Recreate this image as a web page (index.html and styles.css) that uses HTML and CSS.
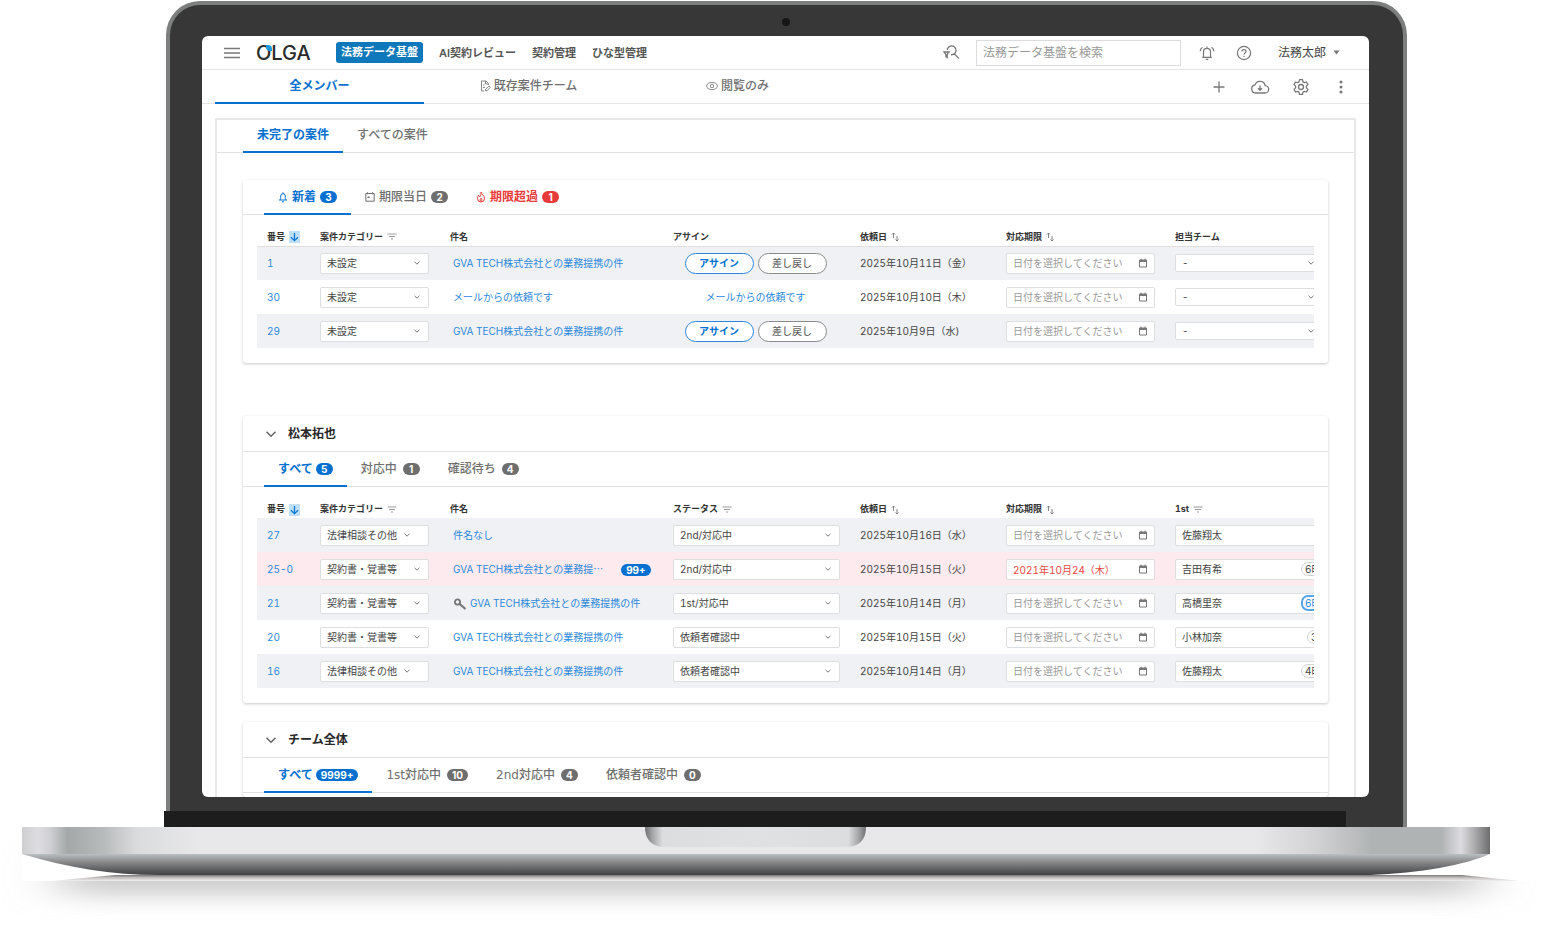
FILE: index.html
```html
<!DOCTYPE html>
<html lang="ja">
<head>
<meta charset="utf-8">
<meta name="viewport" content="width=device-width, initial-scale=1">
<title>OLGA 法務データ基盤</title>
<link rel="stylesheet" href="styles.css">
</head>
<body>
<svg class="sprite" aria-hidden="true">
  <symbol id="chev" viewBox="0 0 8 8"><path d="M1.5 2.8 4 5.2l2.500-2.400" fill="none" stroke="currentColor"/></symbol>
  <symbol id="cal" viewBox="0 0 10 10"><path d="M1.500 2h7v7h-7zM3 .6V2M7 .6V2" fill="none" stroke="currentColor"/><path d="M1.500 2h7v2h-7z" fill="currentColor"/></symbol>
  <symbol id="filter" viewBox="0 0 10 8"><path d="M.5 1h9M2 3.500h6M4 6h2" fill="none" stroke="currentColor" stroke-width="1.200"/></symbol>
  <symbol id="sort" viewBox="0 0 8 10"><path d="M2.500 6V1M1 2.500 2.500 1 4 2.500M6 4v5M4.500 7.500 6 9l1.500-1.500" fill="none" stroke="currentColor" stroke-width=".9"/></symbol>
  <symbol id="down" viewBox="0 0 11 11"><path d="M5.500 1.500v7.500M2 5.700 5.500 9.200 9 5.700" fill="none" stroke="currentColor" stroke-width="1.300"/></symbol>
  <symbol id="fold" viewBox="0 0 12 12"><path d="M1.500 3.800 6 8.300l4.500-4.500" fill="none" stroke="currentColor" stroke-width="1.500"/></symbol>
</svg>

<div class="laptop">
  <div class="lid-stack">
    <div class="lid">
      <div class="lid-top"><span class="camera"></span></div>
      <div class="screen">
        <header class="topbar">
          <button class="icon-btn" aria-label="メニュー"><svg width="16" height="12" viewBox="0 0 16 12"><path d="M0 1.500h16M0 6h16M0 10.500h16" stroke="#7a7a7a" stroke-width="1.300"/></svg></button>
          <a class="logo" href="#">OLGA<span class="logo-dot"></span></a>
          <nav class="nav">
            <a class="current" href="#">法務データ基盤</a>
            <a href="#">AI契約レビュー</a>
            <a href="#">契約管理</a>
            <a href="#">ひな型管理</a>
          </nav>
          <button class="icon-btn advanced" aria-label="詳細検索"><svg width="17" height="16" viewBox="0 0 17 16" fill="none" stroke="#777" stroke-width="1.300"><path d="M4.200 5A4.400 4.400 0 1 1 8 9.700M11.200 8.800l4.800 4.800"/><path d="M1 7h5L4.200 9.400V12.500L2.900 11.700V9.400z"/></svg></button>
          <input class="search" type="search" placeholder="法務データ基盤を検索" aria-label="法務データ基盤を検索">
          <button class="icon-btn bell" aria-label="お知らせ"><svg width="16" height="16" viewBox="0 0 16 16" fill="none" stroke="#777" stroke-width="1.200"><path d="M3.300 12.300h9.400M4.500 12.300V6.800a3.500 3.500 0 0 1 7 0v5.500M8 3.200V1.500M6.700 14.300h2.600M3.500 2.200C2 3.200 1.300 4.600 1.200 6.300M12.500 2.200c1.500 1 2.200 2.400 2.300 4.100"/></svg></button>
          <button class="icon-btn help" aria-label="ヘルプ"><svg width="16" height="16" viewBox="0 0 16 16" fill="none" stroke="#777" stroke-width="1.200"><circle cx="8" cy="8" r="6.600"/><path d="M6 6.500c0-2.700 4-2.500 4 0C10 8 8 8 8 9.500"/><path d="M8 10.800v1.300"/></svg></button>
          <button class="user">法務太郎<svg width="7" height="5" viewBox="0 0 7 5"><path d="M.5.5h6L3.500 4.500z" fill="#777"/></svg></button>
        </header>

        <div class="teambar">
          <nav class="teams">
            <a class="active" href="#">全メンバー</a>
            <a href="#"><svg width="11" height="12" viewBox="0 0 11 12" fill="none" stroke="#888"><path d="M8.500 5V3.500L6 1H1.500v10H4M5.500 1v3h3M3 5h1.500M3 7.500h2M5.500 11l.3-2L9 6l1.300 1.300L7.300 10.500z"/></svg>既存案件チーム</a>
            <a href="#"><svg width="12" height="10" viewBox="0 0 12 10" fill="none" stroke="#888"><ellipse cx="6" cy="5" rx="5.400" ry="3.600"/><circle cx="6" cy="5" r="1.700"/></svg>閲覧のみ</a>
          </nav>
          <div class="tools">
            <button class="icon-btn" aria-label="追加"><svg width="18" height="18" viewBox="0 0 18 18" stroke="#777" stroke-width="1.300"><path d="M3.500 9h11M9 3.500v11"/></svg></button>
            <button class="icon-btn" aria-label="ダウンロード"><svg width="20" height="18" viewBox="0 0 20 18" fill="none" stroke="#777" stroke-width="1.300"><path d="M5.500 15h9.300a3.700 3.700 0 0 0 .4-7.400A5.300 5.300 0 0 0 5 6.900 4.100 4.100 0 0 0 5.500 15z"/><path d="M10 7.500v4.700M8 10.300l2 2 2-2"/></svg></button>
            <button class="icon-btn" aria-label="設定"><svg width="18" height="18" viewBox="0 0 18 18" fill="none" stroke="#777" stroke-width="1.300" stroke-linejoin="round"><path d="M7.500 1.700h3l.5 2.200 1.400.8 2.100-.7 1.500 2.600-1.600 1.500v1.800l1.600 1.500-1.500 2.600-2.100-.7-1.400.8-.5 2.200h-3L7 14.100l-1.400-.8-2.100.7L2 11.400l1.600-1.500V8.100L2 6.600 3.500 4l2.100.7L7 3.900z"/><circle cx="9" cy="9" r="2.500"/></svg></button>
            <button class="icon-btn" aria-label="その他"><svg width="18" height="18" viewBox="0 0 18 18" fill="#777"><circle cx="9" cy="4" r="1.500"/><circle cx="9" cy="9" r="1.500"/><circle cx="9" cy="14" r="1.500"/></svg></button>
          </div>
        </div>

        <main class="panel">
          <nav class="tabs panel-tabs">
            <a class="active" href="#">未完了の案件</a>
            <a href="#">すべての案件</a>
          </nav>

          <section class="card first">
            <nav class="tabs tight">
              <a class="active" href="#"><svg width="10" height="12" viewBox="0 0 10 12" fill="none" stroke="currentColor"><path d="M1 9h8M2 9c.8-1 .7-2 .7-4a2.300 2.300 0 0 1 4.600 0c0 2-.1 3 .7 4M5 2.600V1.300M4 10.800h2"/></svg>新着<span class="badge">3</span></a>
              <a href="#"><svg width="10" height="10" viewBox="0 0 10 10" fill="none" stroke="currentColor"><path d="M.8 1.500h8.400v7.700H.8zM2.500.3v2M7.500.3v2"/><path d="M2.500 4.500h2v1.600h-2z" fill="currentColor" stroke="none"/></svg>期限当日<span class="badge">2</span></a>
              <a class="late" href="#"><svg width="10" height="12" viewBox="0 0 10 12" fill="none" stroke="currentColor"><path d="M5 1c.4 2 3.500 3.500 3.500 6.500a3.500 3.500 0 0 1-7 0C1.500 6 2.300 5 2.500 4.200c.9.5 1.200 1 1.300 1.600C5 4.500 5 3 5 1z"/><path d="M5 7.200c1.400 1.500 1 3 0 3s-1.400-1.500 0-3z"/></svg>期限超過<span class="badge">1</span></a>
            </nav>
            <div class="clip">
              <table>
                <colgroup><col class="c-no"><col class="c-cat"><col><col class="c-status"><col class="c-req"><col class="c-due"><col class="c-last"></colgroup>
                <thead><tr>
                  <th>番号<svg class="down"><use href="#down"/></svg></th>
                  <th>案件カテゴリー<svg class="filter"><use href="#filter"/></svg></th>
                  <th>件名</th><th>アサイン</th>
                  <th>依頼日<svg class="sort"><use href="#sort"/></svg></th>
                  <th>対応期限<svg class="sort"><use href="#sort"/></svg></th>
                  <th>担当チーム</th>
                </tr></thead>
                <tbody>
                  <tr>
                    <td><a href="#">1</a></td>
                    <td><span class="field cat"><select aria-label="案件カテゴリー"><option>未設定</option></select><svg><use href="#chev"/></svg></span></td>
                    <td><a class="title" href="#">GVA TECH株式会社との業務提携の件</a></td>
                    <td><div class="actions"><button class="pill primary">アサイン</button><button class="pill">差し戻し</button></div></td>
                    <td>2025年10月11日（金）</td>
                    <td><span class="field date"><input type="text" placeholder="日付を選択してください" aria-label="対応期限"><svg><use href="#cal"/></svg></span></td>
                    <td><span class="field team"><select aria-label="担当チーム"><option>-</option></select><svg><use href="#chev"/></svg></span></td>
                  </tr>
                  <tr>
                    <td><a href="#">30</a></td>
                    <td><span class="field cat"><select aria-label="案件カテゴリー"><option>未設定</option></select><svg><use href="#chev"/></svg></span></td>
                    <td><a class="title" href="#">メールからの依頼です</a></td>
                    <td><div class="actions"><a href="#">メールからの依頼です</a></div></td>
                    <td>2025年10月10日（木）</td>
                    <td><span class="field date"><input type="text" placeholder="日付を選択してください" aria-label="対応期限"><svg><use href="#cal"/></svg></span></td>
                    <td><span class="field team"><select aria-label="担当チーム"><option>-</option></select><svg><use href="#chev"/></svg></span></td>
                  </tr>
                  <tr>
                    <td><a href="#">29</a></td>
                    <td><span class="field cat"><select aria-label="案件カテゴリー"><option>未設定</option></select><svg><use href="#chev"/></svg></span></td>
                    <td><a class="title" href="#">GVA TECH株式会社との業務提携の件</a></td>
                    <td><div class="actions"><button class="pill primary">アサイン</button><button class="pill">差し戻し</button></div></td>
                    <td>2025年10月9日（水)</td>
                    <td><span class="field date"><input type="text" placeholder="日付を選択してください" aria-label="対応期限"><svg><use href="#cal"/></svg></span></td>
                    <td><span class="field team"><select aria-label="担当チーム"><option>-</option></select><svg><use href="#chev"/></svg></span></td>
                  </tr>
                </tbody>
              </table>
            </div>
          </section>

          <section class="card member">
            <h2><svg><use href="#fold"/></svg>松本拓也</h2>
            <nav class="tabs">
              <a class="active" href="#">すべて<span class="badge">5</span></a>
              <a href="#">対応中<span class="badge">1</span></a>
              <a href="#">確認待ち<span class="badge">4</span></a>
            </nav>
            <div class="clip">
              <table>
                <colgroup><col class="c-no"><col class="c-cat"><col><col class="c-status"><col class="c-req"><col class="c-due"><col class="c-last"></colgroup>
                <thead><tr>
                  <th>番号<svg class="down"><use href="#down"/></svg></th>
                  <th>案件カテゴリー<svg class="filter"><use href="#filter"/></svg></th>
                  <th>件名</th>
                  <th>ステータス<svg class="filter"><use href="#filter"/></svg></th>
                  <th>依頼日<svg class="sort"><use href="#sort"/></svg></th>
                  <th>対応期限<svg class="sort"><use href="#sort"/></svg></th>
                  <th>1st<svg class="filter"><use href="#filter"/></svg></th>
                </tr></thead>
                <tbody>
                  <tr>
                    <td><a href="#">27</a></td>
                    <td><span class="field cat long"><select aria-label="案件カテゴリー"><option>法律相談その他</option></select><svg><use href="#chev"/></svg></span></td>
                    <td><a class="title" href="#">件名なし</a></td>
                    <td><span class="field status"><select aria-label="ステータス"><option>2nd/対応中</option></select><svg><use href="#chev"/></svg></span></td>
                    <td>2025年10月16日（水）</td>
                    <td><span class="field date"><input type="text" placeholder="日付を選択してください" aria-label="対応期限"><svg><use href="#cal"/></svg></span></td>
                    <td><span class="field person"><select aria-label="1st"><option>佐藤翔太</option></select></span></td>
                  </tr>
                  <tr class="overdue">
                    <td><a href="#">25-0</a></td>
                    <td><span class="field cat"><select aria-label="案件カテゴリー"><option>契約書・覚書等</option></select><svg><use href="#chev"/></svg></span></td>
                    <td><a class="title" href="#">GVA TECH株式会社との業務提<span class="dots">…</span></a><span class="badge count">99+</span></td>
                    <td><span class="field status"><select aria-label="ステータス"><option>2nd/対応中</option></select><svg><use href="#chev"/></svg></span></td>
                    <td>2025年10月15日（火）</td>
                    <td><span class="field date late"><input type="text" value="2021年10月24（木）" aria-label="対応期限"><svg><use href="#cal"/></svg></span></td>
                    <td><span class="field person"><select aria-label="1st"><option>吉田有希</option></select><span class="hours">6時間</span></span></td>
                  </tr>
                  <tr>
                    <td><a href="#">21</a></td>
                    <td><span class="field cat"><select aria-label="案件カテゴリー"><option>契約書・覚書等</option></select><svg><use href="#chev"/></svg></span></td>
                    <td><svg class="key" viewBox="0 0 14 12"><circle cx="4.500" cy="4" r="2.600" fill="none" stroke="#777" stroke-width="1.800"/><path d="M6.500 5.800 12.500 11" stroke="#777" stroke-width="2.200"/></svg><a href="#">GVA TECH株式会社との業務提携の件</a></td>
                    <td><span class="field status"><select aria-label="ステータス"><option>1st/対応中</option></select><svg><use href="#chev"/></svg></span></td>
                    <td>2025年10月14日（月）</td>
                    <td><span class="field date"><input type="text" placeholder="日付を選択してください" aria-label="対応期限"><svg><use href="#cal"/></svg></span></td>
                    <td><span class="field person"><select aria-label="1st"><option>高橋里奈</option></select><span class="hours mine">6時間</span></span></td>
                  </tr>
                  <tr>
                    <td><a href="#">20</a></td>
                    <td><span class="field cat"><select aria-label="案件カテゴリー"><option>契約書・覚書等</option></select><svg><use href="#chev"/></svg></span></td>
                    <td><a class="title" href="#">GVA TECH株式会社との業務提携の件</a></td>
                    <td><span class="field status"><select aria-label="ステータス"><option>依頼者確認中</option></select><svg><use href="#chev"/></svg></span></td>
                    <td>2025年10月15日（火）</td>
                    <td><span class="field date"><input type="text" placeholder="日付を選択してください" aria-label="対応期限"><svg><use href="#cal"/></svg></span></td>
                    <td><span class="field person"><select aria-label="1st"><option>小林加奈</option></select><span class="hours short">3日</span></span></td>
                  </tr>
                  <tr>
                    <td><a href="#">16</a></td>
                    <td><span class="field cat long"><select aria-label="案件カテゴリー"><option>法律相談その他</option></select><svg><use href="#chev"/></svg></span></td>
                    <td><a class="title" href="#">GVA TECH株式会社との業務提携の件</a></td>
                    <td><span class="field status"><select aria-label="ステータス"><option>依頼者確認中</option></select><svg><use href="#chev"/></svg></span></td>
                    <td>2025年10月14日（月）</td>
                    <td><span class="field date"><input type="text" placeholder="日付を選択してください" aria-label="対応期限"><svg><use href="#cal"/></svg></span></td>
                    <td><span class="field person"><select aria-label="1st"><option>佐藤翔太</option></select><span class="hours">4時間</span></span></td>
                  </tr>
                </tbody>
              </table>
            </div>
          </section>

          <section class="card whole-team">
            <h2><svg><use href="#fold"/></svg>チーム全体</h2>
            <nav class="tabs">
              <a class="active" href="#">すべて<span class="badge">9999+</span></a>
              <a href="#">1st対応中<span class="badge">10</span></a>
              <a href="#">2nd対応中<span class="badge">4</span></a>
              <a href="#">依頼者確認中<span class="badge">0</span></a>
            </nav>
          </section>
        </main>
      </div>
    </div>
    <div class="hinge"></div>
  </div>

  <svg class="base" viewBox="0 0 1552 99" preserveAspectRatio="none" aria-hidden="true">
    <defs>
      <linearGradient id="deck" gradientUnits="userSpaceOnUse" x1="22" y1="0" x2="1490" y2="0">
        <stop offset="0" stop-color="#cfcfd2"/><stop offset=".011" stop-color="#dddde1"/><stop offset=".019" stop-color="#d0d0d4"/>
        <stop offset=".031" stop-color="#a3a8a8"/><stop offset=".056" stop-color="#b8bbbc"/><stop offset=".078" stop-color="#dadbdc"/>
        <stop offset=".12" stop-color="#e8e8ea"/><stop offset=".84" stop-color="#e8e8ea"/><stop offset=".88" stop-color="#d3d3d5"/>
        <stop offset=".92" stop-color="#b0b3b4"/><stop offset=".967" stop-color="#b0b3b4"/><stop offset=".98" stop-color="#dcdbe0"/>
        <stop offset=".988" stop-color="#b4b4b6"/><stop offset="1" stop-color="#6d6d6e"/>
      </linearGradient>
      <linearGradient id="belly" x1="0" y1="0" x2="0" y2="1">
        <stop offset="0" stop-color="#bcbfc2"/><stop offset=".4" stop-color="#858789"/><stop offset="1" stop-color="#414143"/>
      </linearGradient>
      <linearGradient id="notch" x1="0" y1="0" x2="1" y2="0">
        <stop offset="0" stop-color="#6f7072"/><stop offset=".035" stop-color="#a6a7a9"/><stop offset=".08" stop-color="#dcdddf"/>
        <stop offset=".5" stop-color="#dfe1e2"/><stop offset=".92" stop-color="#dcdddf"/><stop offset=".965" stop-color="#a6a7a9"/><stop offset="1" stop-color="#6f7072"/>
      </linearGradient>
      <linearGradient id="contact" x1="0" y1="0" x2="0" y2="1">
        <stop offset="0" stop-color="#77757a"/><stop offset=".4" stop-color="#bdbab8"/><stop offset="1" stop-color="#f2f1f0"/>
      </linearGradient>
      <filter id="soft" x="-5%" y="-100%" width="110%" height="300%"><feGaussianBlur stdDeviation="26 11"/></filter>
    </defs>
    <rect x="60" y="30" width="1420" height="38" fill="#cbcbcb" filter="url(#soft)"/>
    <path d="M22 0H1552V54H22z" fill="#fff"/>
    <path d="M52 54 115 48H1462L1520 54z" fill="url(#contact)"/>
    <path d="M22 27C70 41 110 48 160 48H1370C1420 46 1465 38 1490 27z" fill="url(#belly)"/>
    <rect x="22" y="0" width="1468" height="27" fill="url(#deck)"/>
    <path d="M645 0H866C866 12 860 20 846 20H665C651 20 645 12 645 0z" fill="url(#notch)"/>
  </svg>
</div>
</body>
</html>
```

FILE: styles.css
```css
* { box-sizing: border-box; }

body {
  margin: 0;
  background: #fff;
  color: #444;
  font: 10px/16px Inter, "Noto Sans CJK JP", sans-serif;
}

a { color: inherit; text-decoration: none; }

button, input, select {
  margin: 0;
  padding: 0;
  border: 0;
  background: none;
  color: inherit;
  font: inherit;
}

svg { display: block; flex: none; }
.sprite { position: absolute; width: 0; height: 0; }

/* Laptop frame */
.laptop { overflow: hidden; }
.lid-stack { display: grid; padding: 1px 145px 0 164px; }
.lid-stack > * { grid-area: 1 / 1; min-width: 0; }
.lid {
  margin-left: 2px;
  padding: 0 34px 30px 32px;
  border: 4px solid #7d7f7e;
  border-bottom: 0;
  border-radius: 34px 34px 0 0;
  background: #373737;
}
.lid-top { display: flex; justify-content: center; height: 31px; padding-top: 13px; }
.camera { width: 8px; height: 8px; border-radius: 50%; background: #161616; }
.hinge { align-self: end; height: 16px; margin-right: 61px; background: #1d1d1d; }
.base { width: 100%; height: 99px; }
.screen { overflow: hidden; border-radius: 6px; background: #fff; }

/* Top bar */
.icon-btn { display: flex; align-items: center; justify-content: center; flex: none; }
.topbar {
  display: flex;
  align-items: center;
  height: 34px;
  padding: 0 29px 0 22px;
  border-bottom: 1px solid #e4e4e4;
}
.logo { position: relative; width: 64px; margin: 0 16px; color: #2b2b2b; font-size: 20px; line-height: 24px; font-weight: 500; }
.logo-dot { position: absolute; top: 4px; left: 10px; width: 6px; height: 6px; border-radius: 0 4px 0 4px; background: #1e9be0; }
.nav { display: flex; align-items: center; gap: 16px; color: #555; font-size: 11px; font-weight: 600; white-space: nowrap; }
.nav .current { padding: 2px 5px; border-radius: 3px; background: #0f78ba; color: #fff; line-height: 17px; }
.advanced { margin-left: auto; }
.search { width: 205px; height: 26px; margin: 0 18px 0 16px; padding: 0 6px; border: 1px solid #dcdcdc; font-size: 12px; }
.search::placeholder, .date input::placeholder { color: #999; opacity: 1; }
.help { margin: 0 26px 0 21px; }
.user { display: flex; align-items: center; gap: 7px; font-size: 12px; white-space: nowrap; }

/* Team bar */
.teambar {
  display: flex;
  justify-content: space-between;
  height: 34px;
  padding: 0 19px 0 13px;
  border-bottom: 1px solid #e4e4e4;
}
.teams { display: flex; color: #6f6f6f; font-size: 12px; font-weight: 500; }
.teams a { display: flex; align-items: center; justify-content: center; gap: 3px; width: 209px; height: 34px; border-bottom: 2px solid transparent; }
.teams .active, .tabs .active { border-color: #0570d0; color: #0570d0; font-weight: 700; }
.tools { display: flex; align-items: center; gap: 22px; }

/* Content panel */
.panel { margin: 14px 13px 0; padding: 0 26px; border: 2px solid #e8e8e8; border-bottom: 0; border-radius: 2px 2px 0 0; }
.tabs { display: flex; height: 35px; padding-left: 21px; border-bottom: 1px solid #e2e2e2; color: #6f6f6f; font-size: 12px; font-weight: 500; white-space: nowrap; }
.tabs a { display: flex; align-items: center; gap: 6px; height: 35px; padding: 0 14px; border-bottom: 2px solid transparent; }
.tabs .active { gap: 3px; }
.tabs.tight a { gap: 4px; }
.tabs .late { color: #e83a3a; font-weight: 700; }
.panel-tabs { height: 33px; margin: 0 -26px; padding-left: 26px; }
.panel-tabs a { height: 33px; padding-bottom: 2px; }
.whole-team .tabs { font-family: "DejaVu Sans", "Noto Sans CJK JP", sans-serif; }

.badge {
  min-width: 17px;
  padding: 0 5px;
  border-radius: 6px;
  background: #6e6e6e;
  color: #fff;
  font-family: Inter, sans-serif;
  font-size: 10px;
  line-height: 12px;
  font-weight: 700;
  text-align: center;
}
.active .badge, .count { background: #0570d0; }
.late .badge { background: #e83a3a; }

.card { border-radius: 3px; background: #fff; box-shadow: 0 1px 3px #00000038; }
.first { margin-top: 27px; padding-bottom: 15px; }
.member { margin-top: 53px; padding-bottom: 15px; }
.whole-team { margin-top: 19px; padding-bottom: 4px; }
.card h2 {
  display: flex;
  align-items: center;
  gap: 11px;
  height: 36px;
  margin: 0;
  padding-left: 22px;
  border-bottom: 1px solid #e2e2e2;
  color: #262626;
  font-size: 12px;
  font-weight: 700;
}
.card h2 svg { width: 12px; height: 12px; color: #666; }

/* Case table: the last column runs past the visible area */
.clip { overflow: hidden; margin: 0 14px; }
table { width: calc(100% + 46px); border-collapse: collapse; table-layout: fixed; font-variant-numeric: tabular-nums; }
.c-no { width: 53px; }
.c-cat { width: 130px; }
.c-status { width: 187px; }
.c-req { width: 146px; }
.c-due { width: 169px; }
.c-last { width: 195px; }
th { height: 31px; padding: 0 0 2px 10px; color: #333; font-size: 9px; line-height: 14px; font-weight: 700; text-align: left; vertical-align: bottom; white-space: nowrap; }
th svg { display: inline-block; margin-left: 4px; vertical-align: middle; color: #999; }
.down { width: 11px; height: 12px; background: #bfdffa; color: #0b78d8; }
.filter { width: 10px; height: 8px; }
.sort { width: 8px; height: 10px; color: #777; }
.first thead { border-bottom: 1px solid #dedede; }
td { height: 34px; padding: 0 0 0 10px; white-space: nowrap; }
td a { color: #2d88dc; }
td input, td select { font-variant-numeric: tabular-nums; }
tbody tr:nth-child(odd) { background: #eff1f4; }
tbody .overdue { background: #fdeaee; }
.title { margin-left: 3px; }
.dots { font-family: "Noto Sans CJK JP", sans-serif; }
.count { display: inline-block; margin-left: 18px; vertical-align: middle; }
.key { display: inline-block; width: 14px; height: 12px; margin: 0 3px; vertical-align: middle; }

.field { display: grid; align-items: center; }
.field > * { grid-area: 1 / 1; }
.field select, .field input { width: 100%; height: 21px; padding: 0 6px; border: 1px solid #dcdee0; border-radius: 2px; background: #fff; appearance: none; }
.field svg { justify-self: end; width: 8px; height: 8px; margin-right: 8px; color: #777; pointer-events: none; }
.cat { width: 109px; }
.cat.long svg { margin-right: 18px; }
.status { width: 167px; }
.date { width: 149px; }
.date svg { width: 10px; height: 10px; margin-right: 7px; }
.field.late input { color: #e84444; }
.team { width: 148px; }
.team select { height: 18px; }
.person { width: 170px; }
.hours { justify-self: start; margin-left: 126px; padding: 0 3px; border: 1px solid #d4d4d4; border-radius: 7px; background: #fff; line-height: 12px; pointer-events: none; }
.hours.mine { padding: 0 2px; border: 2px solid #58a5ea; color: #2380d8; }
.hours.short { margin-left: 132px; }

.actions { display: flex; justify-content: center; gap: 4px; padding-right: 12px; }
.pill { width: 69px; height: 21px; border: 1px solid #8a8a8a; border-radius: 11px; background: #fff; color: #666; font-weight: 500; }
.pill.primary { border-color: #2b86dd; color: #0570d0; font-weight: 700; }
```
